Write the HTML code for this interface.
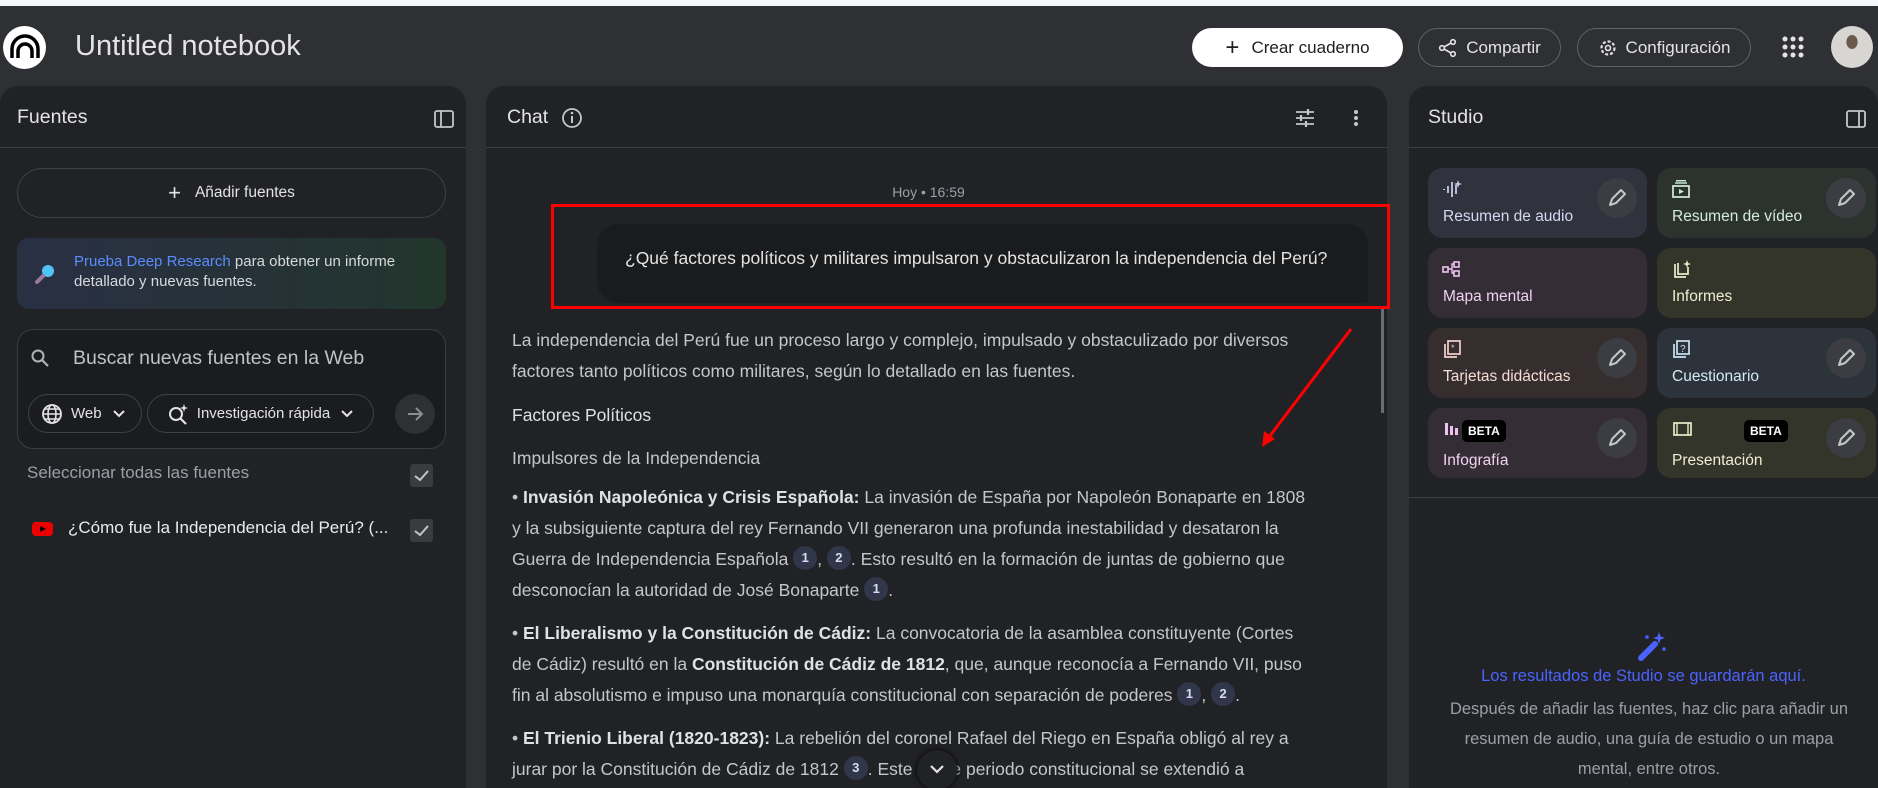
<!DOCTYPE html>
<html style="overflow:hidden;height:788px"><head><meta charset="utf-8"><style>
*{box-sizing:border-box;margin:0;padding:0}
body{width:1878px;height:788px;overflow:hidden;background:#2f3033;font-family:"Liberation Sans",sans-serif;color:#e3e3e3;position:relative}
.a{position:absolute}
.top{left:0;top:0;width:1878px;height:6px;background:#f6f7f9}
.panel{position:absolute;top:86px;height:702px;background:#212226;border-radius:18px 18px 0 0}
.hd{position:absolute;left:0;right:0;top:0;height:62px;border-bottom:1px solid #3b3d41}
.pill{position:absolute;border-radius:26px;display:flex;align-items:center;justify-content:center;font-size:17px}
.tx{position:absolute;white-space:nowrap;font-size:17.5px;color:#c4c7c5;line-height:31px}
.tx b{color:#dfe1e3}
.c{display:inline-block;width:24px;height:24px;border-radius:12px;background:#32364a;color:#d6dcf5;font-size:13px;font-weight:bold;text-align:center;line-height:24px;vertical-align:middle;margin-top:-4px}
.card{position:absolute;width:219px;height:70px;border-radius:14px}
.card .l{position:absolute;left:15px;top:40px;font-size:15.5px}
.card .pen{position:absolute;right:10px;top:10px;width:40px;height:40px;border-radius:20px;background:#3c3d42;display:flex;align-items:center;justify-content:center}
.card .ic{position:absolute;left:14px;top:12px}
.beta{position:absolute;top:12px;background:#000;color:#fff;font-size:12px;font-weight:bold;padding:4px 6px;border-radius:5px}
.chk{position:absolute;width:23px;height:23px;background:#3a3b3f;border-radius:3px}
</style></head><body>
<div class="a top"></div>
<div class="a" style="left:3px;top:26px;width:43px;height:43px;border-radius:50%;background:#fff"></div>
<svg class="a" style="left:9px;top:33px" width="32" height="28" viewBox="0 0 32 28"><path d="M3 25 V16 A13 13 0 0 1 29 16 V25" stroke="#000" stroke-width="3.5" fill="none"/><path d="M9 25 V18 A7 7 0 0 1 23 18 V25" stroke="#000" stroke-width="3.5" fill="none"/></svg>
<div class="a" style="left:75px;top:30px;font-size:29px;color:#e3e3e3">Untitled notebook</div>
<div class="pill" style="left:1192px;top:28px;width:211px;height:39px;background:#fff;color:#1f1f1f"><span style="font-size:24px;margin-right:12px;font-weight:300">+</span>Crear cuaderno</div>
<div class="pill" style="left:1418px;top:28px;width:143px;height:39px;border:1px solid #5f6368;color:#e3e3e3"><svg width="20" height="20" viewBox="0 0 20 20" style="margin-right:8px"><circle cx="15" cy="4" r="2.3" fill="none" stroke="#e3e3e3" stroke-width="1.6"/><circle cx="4" cy="10" r="2.3" fill="none" stroke="#e3e3e3" stroke-width="1.6"/><circle cx="15" cy="16" r="2.3" fill="none" stroke="#e3e3e3" stroke-width="1.6"/><path d="M6 9 L13 5 M6 11 L13 15" stroke="#e3e3e3" stroke-width="1.6"/></svg>Compartir</div>
<div class="pill" style="left:1577px;top:28px;width:174px;height:39px;border:1px solid #5f6368;color:#e3e3e3"><svg width="20" height="20" viewBox="0 0 20 20" style="margin-right:8px"><circle cx="10" cy="10" r="6.5" fill="none" stroke="#e3e3e3" stroke-width="2.2" stroke-dasharray="3 2"/><circle cx="10" cy="10" r="2.5" fill="none" stroke="#e3e3e3" stroke-width="1.6"/></svg>Configuración</div>
<svg class="a" style="left:1782px;top:36px" width="22" height="22"><g fill="#e3e3e3"><circle cx="3" cy="3" r="2.5"/><circle cx="11" cy="3" r="2.5"/><circle cx="19" cy="3" r="2.5"/><circle cx="3" cy="11" r="2.5"/><circle cx="11" cy="11" r="2.5"/><circle cx="19" cy="11" r="2.5"/><circle cx="3" cy="19" r="2.5"/><circle cx="11" cy="19" r="2.5"/><circle cx="19" cy="19" r="2.5"/></g></svg>
<div class="a" style="left:1831px;top:26px;width:42px;height:42px;border-radius:50%;background:radial-gradient(ellipse at 50% 38%,#6b5a4c 0 18%,#d8d6d2 20% 100%)"></div>

<div class="panel" style="left:0;width:466px">
 <div class="hd"><div class="a" style="left:17px;top:20px;font-size:19.5px">Fuentes</div>
 <svg class="a" style="left:434px;top:24px" width="20" height="18"><rect x="1" y="1" width="18" height="16" rx="2" fill="none" stroke="#c4c7c5" stroke-width="1.8"/><path d="M7 1 V17" stroke="#c4c7c5" stroke-width="1.8"/></svg></div>
 <div class="pill" style="left:17px;top:82px;width:429px;height:50px;border:1px solid #3f4145;font-size:15.5px"><span style="font-size:22px;margin-right:14px">+</span>Añadir fuentes</div>
 <div class="a" style="left:17px;top:152px;width:429px;height:71px;border-radius:12px;background:linear-gradient(90deg,#2a3044,#253236 60%,#22362c)"></div>
 <svg class="a" style="left:33px;top:175px" width="24" height="26"><circle cx="15" cy="10" r="6" fill="#4fc3f7"/><path d="M10 15 L4 21" stroke="#9a7aa0" stroke-width="4" stroke-linecap="round"/></svg>
 <div class="a" style="left:74px;top:166px;font-size:15px;line-height:20px;color:#d7d9dc">
 <span style="color:#5b8cff">Prueba Deep Research</span> para obtener un informe<br>detallado y nuevas fuentes.</div>
 <div class="a" style="left:17px;top:243px;width:429px;height:120px;border-radius:16px;border:1px solid #3a3c40;background:#1b1c1f"></div>
 <svg class="a" style="left:30px;top:262px" width="20" height="20"><circle cx="8" cy="8" r="5.5" fill="none" stroke="#aeb1b5" stroke-width="2"/><path d="M12 12 L18 18" stroke="#aeb1b5" stroke-width="2.2"/></svg>
 <div class="a" style="left:73px;top:261px;font-size:19.5px;color:#bfc2c6">Buscar nuevas fuentes en la Web</div>
 <div class="pill" style="left:28px;top:308px;width:114px;height:39px;border:1px solid #3f4145;font-size:15px;justify-content:flex-start;padding-left:12px"><svg width="22" height="22" viewBox="0 0 22 22" style="margin-right:8px"><circle cx="11" cy="11" r="9" fill="none" stroke="#e3e3e3" stroke-width="1.8"/><ellipse cx="11" cy="11" rx="4" ry="9" fill="none" stroke="#e3e3e3" stroke-width="1.6"/><path d="M2 11 H20 M4 6 H18 M4 16 H18" stroke="#e3e3e3" stroke-width="1.4"/></svg>Web<svg width="14" height="10" style="margin-left:10px"><path d="M2 2 L7 7 L12 2" stroke="#e3e3e3" stroke-width="2" fill="none"/></svg></div>
 <div class="pill" style="left:147px;top:308px;width:227px;height:39px;border:1px solid #3f4145;font-size:15px"><svg width="22" height="22" style="margin-right:8px"><circle cx="9" cy="11" r="6" fill="none" stroke="#e3e3e3" stroke-width="2"/><path d="M13 15 L19 21" stroke="#e3e3e3" stroke-width="2.2"/><path d="M17 1 L18 4 L21 5 L18 6 L17 9 L16 6 L13 5 L16 4Z" fill="#e3e3e3"/></svg>Investigación rápida<svg width="14" height="10" style="margin-left:10px"><path d="M2 2 L7 7 L12 2" stroke="#e3e3e3" stroke-width="2" fill="none"/></svg></div>
 <div class="a" style="left:395px;top:308px;width:40px;height:40px;border-radius:50%;background:#2e3033"></div>
 <svg class="a" style="left:405px;top:318px" width="20" height="20"><path d="M3 10 H17 M11 4 L17 10 L11 16" stroke="#8a8d91" stroke-width="2" fill="none"/></svg>
 <div class="a" style="left:27px;top:377px;font-size:17px;color:#9aa0a6">Seleccionar todas las fuentes</div>
 <div class="chk" style="left:410px;top:378px"><svg width="23" height="23"><path d="M5 12 L10 16 L18 7" stroke="#c4c7c5" stroke-width="2" fill="none"/></svg></div>
 <div class="a" style="left:32px;top:436px;width:21px;height:14px;background:#e00;border-radius:4px"></div>
 <div class="a" style="left:40px;top:440px;border-left:6px solid #000;border-top:3px solid transparent;border-bottom:3px solid transparent"></div>
 <div class="a" style="left:68px;top:432px;font-size:17px;color:#e8eaed">¿Cómo fue la Independencia del Perú? (...</div>
 <div class="chk" style="left:410px;top:433px"><svg width="23" height="23"><path d="M5 12 L10 16 L18 7" stroke="#c4c7c5" stroke-width="2" fill="none"/></svg></div>
</div>

<div class="panel" style="left:486px;width:901px">
 <div class="hd"><div class="a" style="left:21px;top:20px;font-size:19.5px">Chat</div>
 <svg class="a" style="left:75px;top:21px" width="22" height="22"><circle cx="11" cy="11" r="9" fill="none" stroke="#c4c7c5" stroke-width="1.8"/><path d="M11 9 V16" stroke="#c4c7c5" stroke-width="2"/><circle cx="11" cy="6" r="1.3" fill="#c4c7c5"/></svg>
 <svg class="a" style="left:809px;top:23px" width="20" height="18"><path d="M1 3 H19 M1 9 H19 M1 15 H19" stroke="#c4c7c5" stroke-width="1.8"/><path d="M13 0 V6 M6 6 V12 M11 12 V18" stroke="#c4c7c5" stroke-width="2.2"/></svg>
 <svg class="a" style="left:867px;top:23px" width="6" height="18"><circle cx="3" cy="3" r="2" fill="#c4c7c5"/><circle cx="3" cy="9" r="2" fill="#c4c7c5"/><circle cx="3" cy="15" r="2" fill="#c4c7c5"/></svg></div>
 <div class="a" style="left:0;width:885px;top:98px;text-align:center;font-size:14px;color:#9aa0a6">Hoy • 16:59</div>
 <div class="a" style="left:111px;top:138px;width:771px;height:79px;border-radius:22px 22px 4px 22px;background:#1a1b1d"></div>
 <div class="a" style="left:139px;top:162px;font-size:17.5px;color:#e3e3e3;white-space:nowrap">¿Qué factores políticos y militares impulsaron y obstaculizaron la independencia del Perú?</div>
 <div class="a" style="left:65px;top:118px;width:839px;height:105px;border:3px solid #f00"></div>
 <div class="a" style="left:895px;top:223px;width:3px;height:104px;background:#6b6d70"></div>
</div>
<div class="tx" style="left:512px;top:325px">La independencia del Perú fue un proceso largo y complejo, impulsado y obstaculizado por diversos<br>factores tanto políticos como militares, según lo detallado en las fuentes.</div>
<div class="tx" style="left:512px;top:400px;color:#dfe1e3">Factores Políticos</div>
<div class="tx" style="left:512px;top:443px">Impulsores de la Independencia</div>
<div class="tx" style="left:512px;top:482px">• <b>Invasión Napoleónica y Crisis Española:</b> La invasión de España por Napoleón Bonaparte en 1808<br>y la subsiguiente captura del rey Fernando VII generaron una profunda inestabilidad y desataron la<br>Guerra de Independencia Española <span class="c">1</span>, <span class="c">2</span>. Esto resultó en la formación de juntas de gobierno que<br>desconocían la autoridad de José Bonaparte <span class="c">1</span>.</div>
<div class="tx" style="left:512px;top:618px">• <b>El Liberalismo y la Constitución de Cádiz:</b> La convocatoria de la asamblea constituyente (Cortes<br>de Cádiz) resultó en la <b>Constitución de Cádiz de 1812</b>, que, aunque reconocía a Fernando VII, puso<br>fin al absolutismo e impuso una monarquía constitucional con separación de poderes <span class="c">1</span>, <span class="c">2</span>.</div>
<div class="tx" style="left:512px;top:723px">• <b>El Trienio Liberal (1820-1823):</b> La rebelión del coronel Rafael del Riego en España obligó al rey a<br>jurar por la Constitución de Cádiz de 1812 <span class="c">3</span>. Este &nbsp;&nbsp;&nbsp;&nbsp;&nbsp;&nbsp;&nbsp;e periodo constitucional se extendió a</div>
<div class="a" style="left:917px;top:750px;width:40px;height:40px;border-radius:50%;background:#212226;box-shadow:0 0 6px #000"></div>
<svg class="a" style="left:929px;top:764px" width="16" height="10"><path d="M2 2 L8 8 L14 2" stroke="#e3e3e3" stroke-width="2.2" fill="none"/></svg>
<svg class="a" style="left:0;top:0" width="1878" height="788"><path d="M1351 329 L1266 441" stroke="#f00" stroke-width="3"/><path d="M1262 447 L1264 431 L1275 439 Z" fill="#f00"/></svg>

<div class="panel" style="left:1409px;width:469px">
 <div class="hd"><div class="a" style="left:19px;top:20px;font-size:19.5px">Studio</div>
 <svg class="a" style="left:437px;top:24px" width="20" height="18"><rect x="1" y="1" width="18" height="16" rx="2" fill="none" stroke="#c4c7c5" stroke-width="1.8"/><path d="M13 1 V17" stroke="#c4c7c5" stroke-width="1.8"/></svg></div>
 <div class="a" style="left:0;right:0;top:411px;height:1px;background:#3b3d41"></div>
</div>
<svg width="0" height="0" style="position:absolute"><defs><g id="pn"><path d="M5 19 L7 13 L16 4 L20 8 L11 17 Z" fill="none" stroke="#c4c7c5" stroke-width="2" stroke-linejoin="round"/></g></defs></svg>
<div class="card" style="left:1428px;top:168px;background:#30323d"><svg class="ic" width="20" height="18"><path d="M2 9 V10 M6 6 V13 M10 2 V17 M14 5 V14" stroke="#c6cbe6" stroke-width="1.8"/><path d="M16 0 L17 3 L20 4 L17 5 L16 8 L15 5 L12 4 L15 3Z" fill="#c6cbe6"/></svg><div class="l" style="color:#d4d9f0">Resumen de audio</div><div class="pen"><svg width="24" height="24"><use href="#pn"/></svg></div></div>
<div class="card" style="left:1657px;top:168px;background:#2c332f"><svg class="ic" width="20" height="18"><rect x="2" y="6" width="16" height="11" fill="none" stroke="#c9e6cf" stroke-width="1.8"/><path d="M4 3 H16 M5 0.8 H15" stroke="#c9e6cf" stroke-width="1.5"/><path d="M8 9 L13 11.5 L8 14Z" fill="#c9e6cf"/></svg><div class="l" style="color:#d3ecd8">Resumen de vídeo</div><div class="pen"><svg width="24" height="24"><use href="#pn"/></svg></div></div>
<div class="card" style="left:1428px;top:248px;background:#342d35"><svg class="ic" width="20" height="18"><rect x="1" y="7" width="5" height="5" fill="none" stroke="#eec3ef" stroke-width="1.6"/><rect x="12" y="2" width="5" height="5" fill="none" stroke="#eec3ef" stroke-width="1.6"/><rect x="12" y="11" width="5" height="5" fill="none" stroke="#eec3ef" stroke-width="1.6"/><path d="M6 9 H10 V4 H12 M10 9 V13 H12" stroke="#eec3ef" stroke-width="1.4" fill="none"/></svg><div class="l" style="color:#f0d2f1">Mapa mental</div></div>
<div class="card" style="left:1657px;top:248px;background:#33342a"><svg class="ic" width="20" height="20"><path d="M4 4 V17 H15 M7 3 V14 H17 V7" stroke="#ecebc9" stroke-width="1.7" fill="none"/><path d="M16 0 L17 3 L20 4 L17 5 L16 8 L15 5 L12 4 L15 3Z" fill="#ecebc9"/></svg><div class="l" style="color:#efeed2">Informes</div></div>
<div class="card" style="left:1428px;top:328px;background:#362e2e"><svg class="ic" width="20" height="20"><rect x="6" y="1" width="12" height="13" fill="none" stroke="#f2d2cc" stroke-width="1.7"/><path d="M3 4 V17 H15" stroke="#f2d2cc" stroke-width="1.7" fill="none"/><text x="9" y="11" font-size="9" fill="#f2d2cc">*</text></svg><div class="l" style="color:#f4dcd7">Tarjetas didácticas</div><div class="pen"><svg width="24" height="24"><use href="#pn"/></svg></div></div>
<div class="card" style="left:1657px;top:328px;background:#2d333b"><svg class="ic" width="20" height="20"><rect x="6" y="1" width="12" height="13" fill="none" stroke="#c9e2ef" stroke-width="1.7"/><path d="M3 4 V17 H15" stroke="#c9e2ef" stroke-width="1.7" fill="none"/><text x="9" y="12" font-size="10" fill="#c9e2ef" font-family="Liberation Sans">?</text></svg><div class="l" style="color:#d3e9f4">Cuestionario</div><div class="pen"><svg width="24" height="24"><use href="#pn"/></svg></div></div>
<div class="card" style="left:1428px;top:408px;background:#342d35"><svg class="ic" style="left:17px;top:13px" width="16" height="14"><rect x="0" y="2" width="3" height="12" fill="#eec3ef"/><rect x="5" y="5" width="3" height="9" fill="#eec3ef"/><rect x="10" y="7" width="3" height="7" fill="#eec3ef"/></svg><div class="beta" style="left:34px">BETA</div><div class="l" style="top:44px;color:#f0d2f1">Infografía</div><div class="pen"><svg width="24" height="24"><use href="#pn"/></svg></div></div>
<div class="card" style="left:1657px;top:408px;background:#33342a"><svg class="ic" style="left:16px;top:14px" width="20" height="14"><rect x="1" y="1" width="17" height="12" fill="none" stroke="#ecebc9" stroke-width="1.7"/><path d="M4 1 V13 M15 1 V13" stroke="#ecebc9" stroke-width="1.4"/></svg><div class="beta" style="left:87px">BETA</div><div class="l" style="top:44px;color:#efeed2">Presentación</div><div class="pen"><svg width="24" height="24"><use href="#pn"/></svg></div></div>
<svg class="a" style="left:1637px;top:630px" width="32" height="32" viewBox="0 0 32 32"><path d="M4 28 L18 14" stroke="#4a63ff" stroke-width="6" stroke-linecap="round"/><path d="M22 2 L23.5 6.5 L28 8 L23.5 9.5 L22 14 L20.5 9.5 L16 8 L20.5 6.5Z" fill="#4a63ff"/><circle cx="10" cy="7" r="1.8" fill="#4a63ff"/><circle cx="27" cy="19" r="1.8" fill="#4a63ff"/></svg>
<div class="a" style="left:1409px;width:469px;top:667px;text-align:center;font-size:16.5px;color:#4a63ff">Los resultados de Studio se guardarán aquí.</div>
<div class="a" style="left:1420px;width:458px;top:694px;text-align:center;font-size:16.5px;line-height:30px;color:#9aa0a6;height:94px;overflow:hidden">Después de añadir las fuentes, haz clic para añadir un<br>resumen de audio, una guía de estudio o un mapa<br>mental, entre otros.</div>
</body></html>
